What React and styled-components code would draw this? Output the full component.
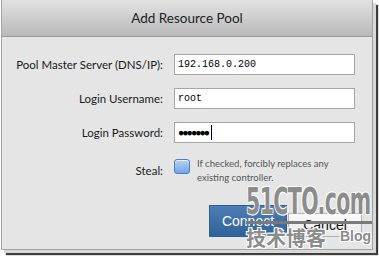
import React from 'react';
import styled, { createGlobalStyle } from 'styled-components';

const GlobalStyle = createGlobalStyle`
  html, body {
    margin: 0;
    padding: 0;
    background: #ffffff;
  }
  body {
    font-family: Lato, "Open Sans", sans-serif;
  }
`;

export default function App() {
  return (
    <>
      <GlobalStyle />
      <Page>
        <Dialog>
          <TitleBar>Add Resource Pool</TitleBar>
          <Body>
            <Form>
              <Label>Pool Master Server (DNS/IP):</Label>
              <Field>192.168.0.200</Field>
              <Label>Login Username:</Label>
              <Field>root</Field>
              <Label>Login Password:</Label>
              <Field $secret>
                ●●●●●●●<Caret />
              </Field>
              <Label>Steal:</Label>
              <StealRow>
                <Check />
                <Hint>
                  If checked, forcibly replaces any
                  <br />
                  existing controller.
                </Hint>
              </StealRow>
            </Form>
            <Buttons>
              <Button $primary>Connect</Button>
              <Button>Cancel</Button>
            </Buttons>
          </Body>
          <Watermark>
            <Site>51CTO.com</Site>
            <Tagline>
              技术博客<small>Blog</small>
            </Tagline>
          </Watermark>
        </Dialog>
      </Page>
    </>
  );
}

const Page = styled.div`
  width: 379px;
  height: 256px;
  padding-left: 1px;
  box-sizing: border-box;
  overflow: hidden;
`;

const Dialog = styled.div`
  position: relative;
  width: 372px;
  height: 250px;
  box-sizing: border-box;
  border: 1px solid #a2a2a2;
  border-top: none;
  background: #e5e5e5;
  box-shadow: 3px 3px 0 #d8d8d8, 5px 5px 1px #3e3e3e;
  display: flex;
  flex-direction: column;
`;

const TitleBar = styled.div`
  height: 36px;
  flex: none;
  display: flex;
  align-items: center;
  justify-content: center;
  background: linear-gradient(#e2e2e2, #b9b9b9);
  border-bottom: 1px solid #9c9c9c;
  font-size: 13.5px;
  color: #222;
`;

const Body = styled.div`
  flex: 1;
  padding: 17px 0 0 0;
  display: flex;
  flex-direction: column;
`;

const Form = styled.div`
  display: grid;
  grid-template-columns: 161px 181px;
  column-gap: 11px;
  row-gap: 13px;
  align-items: center;
`;

const Label = styled.div`
  text-align: right;
  font-size: 11.5px;
  color: #1a1a1a;
  white-space: nowrap;
`;

const Field = styled.div`
  height: 21px;
  box-sizing: border-box;
  border: 1px solid #a6a6a6;
  background: #ffffff;
  display: flex;
  align-items: center;
  padding-left: 3px;
  font-family: "Liberation Mono", monospace;
  font-size: ${(p) => (p.$secret ? '10.5px' : '10px')};
  letter-spacing: ${(p) => (p.$secret ? '-2px' : '0')};
  color: #000;
`;

const Caret = styled.span`
  width: 1px;
  height: 15px;
  margin-left: 3px;
  background: #000;
`;

const StealRow = styled.div`
  display: flex;
  align-items: flex-start;
  gap: 7px;
  margin-top: 1px;
`;

const Check = styled.div`
  width: 16px;
  height: 15px;
  margin-top: 2px;
  box-sizing: border-box;
  border: 1px solid #4a7fc6;
  border-radius: 3px;
  background: linear-gradient(#b9d3f5, #74a3e6);
  box-shadow: inset 0 1px 0 rgba(255, 255, 255, 0.7);
  flex: none;
`;

const Hint = styled.div`
  font-size: 9.5px;
  line-height: 14px;
  color: #555;
`;

const Buttons = styled.div`
  display: flex;
  justify-content: flex-end;
  align-items: flex-end;
  padding: 20px 10px 0 0;
  gap: 1px;
`;

const Button = styled.div`
  width: ${(p) => (p.$primary ? '78px' : '74px')};
  height: ${(p) => (p.$primary ? '32px' : '24px')};
  box-sizing: border-box;
  display: flex;
  align-items: center;
  justify-content: center;
  font-family: "Liberation Sans", Arial, sans-serif;
  font-size: 14px;
  color: ${(p) => (p.$primary ? '#ffffff' : '#111')};
  border: 1px solid ${(p) => (p.$primary ? '#2f5e94' : '#b0b0b0')};
  background: ${(p) =>
    p.$primary
      ? 'linear-gradient(#4d7db5, #2f6299)'
      : 'linear-gradient(#fafafa, #e8e8e8)'};
`;

const Watermark = styled.div`
  position: absolute;
  left: 244px;
  top: 181px;
  width: 128px;
  pointer-events: none;
  color: #8c8c8c;
  text-shadow: 1px 1px 0 #fff, -1px -1px 0 #fff, 1px -1px 0 #fff, -1px 1px 0 #fff;
`;

const Site = styled.div`
  font-family: "DejaVu Sans Condensed", "Liberation Sans Narrow", sans-serif;
  font-weight: bold;
  font-size: 38px;
  line-height: 40px;
  letter-spacing: -1px;
  white-space: nowrap;
  transform: scaleX(0.6);
  transform-origin: left;
  border-bottom: 3px solid #7a7a7a;
  width: 210px;
`;

const Tagline = styled.div`
  font-family: "Noto Sans CJK SC", sans-serif;
  font-weight: bold;
  font-size: 20px;
  line-height: 24px;
  white-space: nowrap;

  small {
    font-family: "Liberation Sans", Arial, sans-serif;
    font-size: 14px;
    margin-left: 14px;
    vertical-align: 5px;
  }
`;
